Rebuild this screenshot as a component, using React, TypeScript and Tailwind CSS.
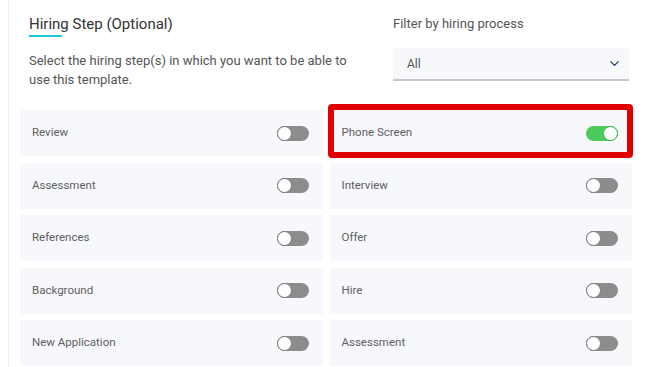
import { ChevronDown } from "lucide-react";

type Step = {
  label: string;
  on?: boolean;
  marked?: boolean;
};

const steps: Step[] = [
  { label: "Review" },
  { label: "Phone Screen", on: true, marked: true },
  { label: "Assessment" },
  { label: "Interview" },
  { label: "References" },
  { label: "Offer" },
  { label: "Background" },
  { label: "Hire" },
  { label: "New Application" },
  { label: "Assessment" },
];

function Toggle({ on }: { on?: boolean }) {
  return (
    <div
      className={`flex items-center w-[32px] h-[15px] rounded-full ${
        on ? "bg-[#4ccb5c] justify-end" : "bg-[#8c8c8c] justify-start"
      }`}>
      <div
        className={`w-[15px] h-[15px] rounded-full bg-white border ${
          on ? "border-[#3fb34f]" : "border-[#7a7a7a]"
        }`}
      />
    </div>
  );
}

function StepCard({ step }: { step: Step }) {
  return (
    <div className="relative">
      <div className="flex items-center justify-between h-[46px] bg-[#f7f8fc] pl-[12px] pr-[14px]">
        <span className="text-[11.5px] text-[#606060]">{step.label}</span>
        <Toggle on={step.on} />
      </div>
      {/* red highlight around the active step */}
      {step.marked && (
        <div className="absolute left-[-2px] top-[-6px] right-[-1px] bottom-[-2px] border-[6px] border-[#e00000] rounded-[4px]" />
      )}
    </div>
  );
}

export default function App() {
  return (
    <div
      className="w-[670px] h-[367px] overflow-hidden bg-white pl-[8px]"
      style={{ fontFamily: "Roboto, 'Liberation Sans', sans-serif" }}>
      <div className="h-full border-l border-[#ececec] pl-[11px] pt-[14px]">
        <div className="flex">
          <div className="w-[373px] pl-[9px]">
            <h2 className="text-[15px] leading-[20px] text-[#333333]">
              Hiring Step (Optional)
            </h2>
            <div className="w-[33px] h-[2px] mt-[1px] bg-[#1ec6d9]" />
            <p className="mt-[14px] w-[330px] text-[13px] leading-[19px] text-[#555555]">
              Select the hiring step(s) in which you want to be able to use this
              template.
            </p>
          </div>
          <div className="w-[236px]">
            <p className="text-[13px] leading-[20px] text-[#555555]">
              Filter by hiring process
            </p>
            <div className="mt-[14px] h-[33px] flex items-center justify-between bg-[#f7f8fc] border-b-2 border-[#c8c8c8] pl-[14px] pr-[7px]">
              <span className="text-[12px] text-[#555555]">All</span>
              <ChevronDown className="w-[15px] h-[15px] text-[#1d3a78]" strokeWidth={2} />
            </div>
          </div>
        </div>

        <div className="mt-[21px] w-[612px] grid grid-cols-2 gap-x-[7px] gap-y-[6.5px]">
          {steps.map((step, i) => (
            <StepCard key={i} step={step} />
          ))}
        </div>
      </div>
    </div>
  );
}
